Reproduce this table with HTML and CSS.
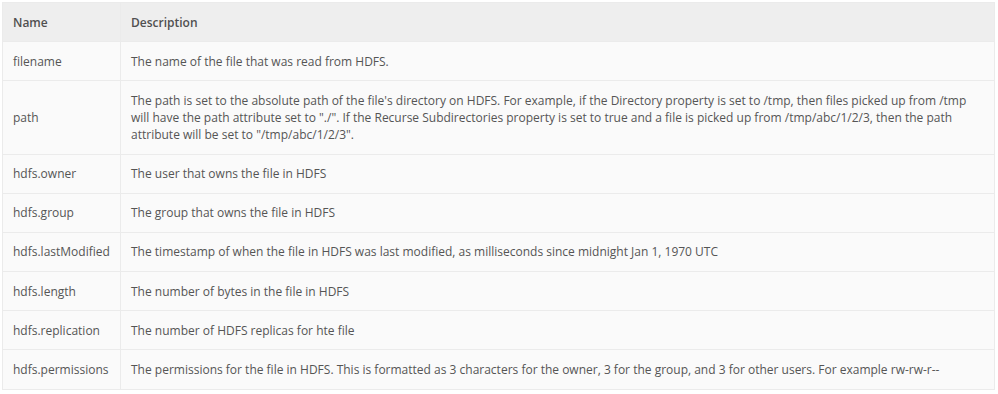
FILE: index.html
```html
<!DOCTYPE html>
<html>
<head>
<meta charset="utf-8">
<link rel="stylesheet" href="styles.css">
</head>
<body>
<table class="attrs">
  <thead>
    <tr><th class="col-name">Name</th><th>Description</th></tr>
  </thead>
  <tbody>
    <tr><td>filename</td><td>The name of the file that was read from HDFS.</td></tr>
    <tr><td>path</td><td>The path is set to the absolute path of the file's directory on HDFS. For example, if the Directory property is set to /tmp, then files picked up from /tmp will have the path attribute set to "./". If the Recurse Subdirectories property is set to true and a file is picked up from /tmp/abc/1/2/3, then the path attribute will be set to "/tmp/abc/1/2/3".</td></tr>
    <tr><td>hdfs.owner</td><td>The user that owns the file in HDFS</td></tr>
    <tr><td>hdfs.group</td><td>The group that owns the file in HDFS</td></tr>
    <tr><td>hdfs.lastModified</td><td>The timestamp of when the file in HDFS was last modified, as milliseconds since midnight Jan 1, 1970 UTC</td></tr>
    <tr><td>hdfs.length</td><td>The number of bytes in the file in HDFS</td></tr>
    <tr><td>hdfs.replication</td><td>The number of HDFS replicas for hte file</td></tr>
    <tr><td>hdfs.permissions</td><td>The permissions for the file in HDFS. This is formatted as 3 characters for the owner, 3 for the group, and 3 for other users. For example rw-rw-r--</td></tr>
  </tbody>
</table>
</body>
</html>
```

FILE: styles.css
```css
html, body {
  margin: 0;
  padding: 0;
  background: #ffffff;
}
body {
  padding: 2px 3px 0 2px;
  font-family: "Open Sans", "Liberation Sans", sans-serif;
  font-size: 12px;
  color: #555555;
}
.attrs {
  width: 100%;
  border-collapse: collapse;
  border: 1px solid #dcdcdc;
  background: #fafafa;
}
.attrs th,
.attrs td {
  text-align: left;
  vertical-align: middle;
  padding: 10.5px 10px;
  line-height: 1.42857;
  border: 1px solid #ebebeb;
}
.attrs th {
  background: #eeeeee;
  font-weight: 600;
  color: #505050;
}
.attrs .col-name {
  width: 97px;
}
```
